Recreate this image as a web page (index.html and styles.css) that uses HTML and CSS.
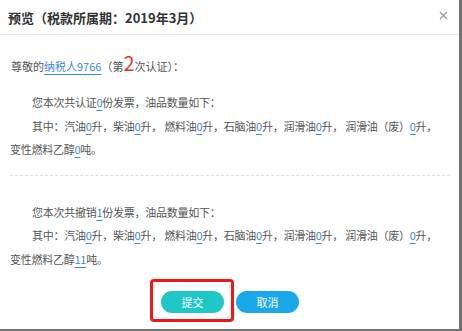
FILE: index.html
```html
<!DOCTYPE html>
<html lang="zh-CN">
<head>
  <meta charset="UTF-8">
  <title>预览</title>
  <link rel="stylesheet" href="styles.css">
</head>
<body>

  <div class="modal">
    <div class="modal-header">
      <h3>预览（税款所属期：2019年3月）</h3>
      <span class="close">
        <svg width="9" height="9" viewBox="0 0 9 9">
          <path d="M1 1 L8 8 M8 1 L1 8" stroke="#9a9a9a" stroke-width="1.2" fill="none"/>
        </svg>
      </span>
    </div>

    <div class="modal-body">
      <p class="greeting">尊敬的<a class="link">纳税人9766</a>（第<span class="times">2</span>次认证）：</p>

      <div class="section divided">
        <p class="indent">您本次共认证<span class="num">0</span>份发票，油品数量如下：</p>
        <p class="indent">其中：汽油<span class="num">0</span>升，柴油<span class="num">0</span>升， 燃料油<span class="num">0</span>升，石脑油<span class="num">0</span>升，润滑油<span class="num">0</span>升， 润滑油（废）<span class="num">0</span>升，<br>变性燃料乙醇<span class="num">0</span>吨。</p>
      </div>

      <div class="section second">
        <p class="indent">您本次共撤销<span class="num">1</span>份发票，油品数量如下：</p>
        <p class="indent">其中：汽油<span class="num">0</span>升，柴油<span class="num">0</span>升， 燃料油<span class="num">0</span>升，石脑油<span class="num">0</span>升，润滑油<span class="num">0</span>升， 润滑油（废）<span class="num">0</span>升，<br>变性燃料乙醇<span class="num">11</span>吨。</p>
      </div>

      <div class="actions">
        <span class="marked"><button class="btn submit">提交</button></span>
        <button class="btn cancel">取消</button>
      </div>
    </div>
  </div>

</body>
</html>
```

FILE: styles.css
```css
* {
  box-sizing: border-box;
  margin: 0;
  padding: 0;
}

body {
  font-family: "Noto Sans CJK SC", "Noto Sans", sans-serif;
  background: #727272;
  width: 462px;
  height: 331px;
  overflow: hidden;
}

.modal {
  width: 459px;
  height: 329px;
  background: #fff;
  color: #555;
  font-size: 11px;
}

.modal-header {
  height: 35px;
  display: flex;
  align-items: center;
  justify-content: space-between;
  padding: 0 11px 0 8px;
  border-bottom: 1px solid #e6e6e6;
}

.modal-header h3 {
  font-size: 13px;
  font-weight: bold;
  color: #333;
}

.close {
  display: flex;
  margin-top: -3px;
}

.modal-body {
  padding: 0 9px 0 10px;
}

.greeting {
  margin-top: 18px;
  line-height: 24px;
  padding-left: 1px;
}

.link {
  color: #3a8ad8;
  text-decoration: underline;
  text-underline-offset: 3px;
}

.times {
  color: #e8352c;
  font-size: 20px;
  line-height: 1;
}

.section {
  padding: 13px 0 13px;
  line-height: 23.5px;
  letter-spacing: -0.25px;
}

.section.divided {
  border-bottom: 1px dashed #dcdcdc;
}

.section.second {
  padding-top: 25px;
}

.indent {
  text-indent: 22px;
}

.num {
  color: #3a8ad8;
  text-decoration: underline;
  text-underline-offset: 3px;
}

.actions {
  display: flex;
  justify-content: center;
  gap: 12px;
  margin-top: 7px;
}

.marked {
  position: relative;
  display: flex;
}

.marked::after {
  content: "";
  position: absolute;
  top: -12px;
  left: -11px;
  right: -10px;
  bottom: -9px;
  border: 3px solid #f21616;
  border-radius: 4px;
}

.btn {
  width: 63px;
  height: 22px;
  border: none;
  border-radius: 11px;
  color: #fff;
  font-family: "Noto Sans CJK SC", sans-serif;
  font-size: 11px;
  cursor: pointer;
}

.submit {
  background: #1fc8c6;
}

.cancel {
  background: #1aa8ea;
}
```
